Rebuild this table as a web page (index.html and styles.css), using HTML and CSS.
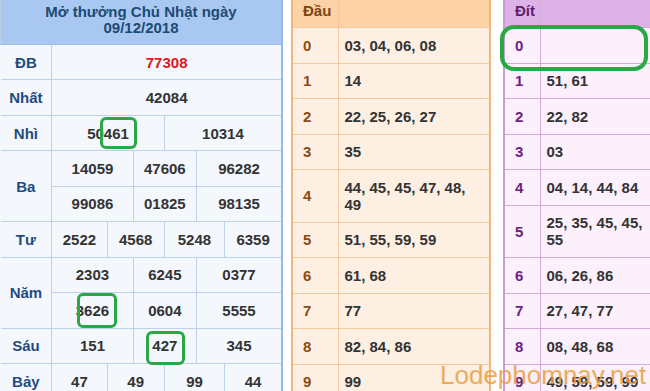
FILE: index.html
```html
<!DOCTYPE html>
<html lang="vi">
<head>
<meta charset="utf-8">
<title>Kết quả xổ số</title>
<link rel="stylesheet" href="styles.css">
</head>
<body>
<div class="page">
  <table class="kq">
    <colgroup>
      <col class="c-label"><col class="c1"><col class="c2"><col class="c3"><col class="c4"><col class="c5"><col class="c6">
    </colgroup>
    <tr><th colspan="7" class="kq-head">Mở thưởng Chủ Nhật ngày<br>09/12/2018</th></tr>
    <tr><td class="lbl">ĐB</td><td colspan="6" class="db">77308</td></tr>
    <tr><td class="lbl">Nhất</td><td colspan="6">42084</td></tr>
    <tr><td class="lbl">Nhì</td><td colspan="3">50461</td><td colspan="3">10314</td></tr>
    <tr><td class="lbl" rowspan="2">Ba</td><td colspan="2">14059</td><td colspan="2">47606</td><td colspan="2">96282</td></tr>
    <tr><td colspan="2">99086</td><td colspan="2">01825</td><td colspan="2">98135</td></tr>
    <tr><td class="lbl">Tư</td><td>2522</td><td colspan="2">4568</td><td colspan="2">5248</td><td>6359</td></tr>
    <tr><td class="lbl" rowspan="2">Năm</td><td colspan="2">2303</td><td colspan="2">6245</td><td colspan="2">0377</td></tr>
    <tr><td colspan="2">3626</td><td colspan="2">0604</td><td colspan="2">5555</td></tr>
    <tr><td class="lbl">Sáu</td><td colspan="2">151</td><td colspan="2">427</td><td colspan="2">345</td></tr>
    <tr><td class="lbl">Bảy</td><td>47</td><td colspan="2">49</td><td colspan="2">99</td><td>44</td></tr>
  </table>

  <table class="lo dau">
    <colgroup><col class="lo-k"><col></colgroup>
    <tr><th>Đầu</th><th></th></tr>
    <tr><td class="k">0</td><td>03, 04, 06, 08</td></tr>
    <tr><td class="k">1</td><td>14</td></tr>
    <tr><td class="k">2</td><td>22, 25, 26, 27</td></tr>
    <tr><td class="k">3</td><td>35</td></tr>
    <tr><td class="k">4</td><td>44, 45, 45, 47, 48, 49</td></tr>
    <tr><td class="k">5</td><td>51, 55, 59, 59</td></tr>
    <tr><td class="k">6</td><td>61, 68</td></tr>
    <tr><td class="k">7</td><td>77</td></tr>
    <tr><td class="k">8</td><td>82, 84, 86</td></tr>
    <tr><td class="k">9</td><td>99</td></tr>
  </table>

  <table class="lo dit">
    <colgroup><col class="lo-k"><col></colgroup>
    <tr><th>Đít</th><th></th></tr>
    <tr><td class="k">0</td><td></td></tr>
    <tr><td class="k">1</td><td>51, 61</td></tr>
    <tr><td class="k">2</td><td>22, 82</td></tr>
    <tr><td class="k">3</td><td>03</td></tr>
    <tr><td class="k">4</td><td>04, 14, 44, 84</td></tr>
    <tr><td class="k">5</td><td>25, 35, 45, 45, 55</td></tr>
    <tr><td class="k">6</td><td>06, 26, 86</td></tr>
    <tr><td class="k">7</td><td>27, 47, 77</td></tr>
    <tr><td class="k">8</td><td>08, 48, 68</td></tr>
    <tr><td class="k">9</td><td>49, 59, 59, 99</td></tr>
  </table>

  <div class="mark m-nhi"></div>
  <div class="mark m-nam"></div>
  <div class="mark m-sau"></div>
  <div class="mark m-dit0"></div>
  <div class="watermark">Lodephomnay.net</div>
</div>
</body>
</html>
```

FILE: styles.css
```css
html, body {
  margin: 0;
  padding: 0;
  background: #ffffff;
}
body {
  width: 650px;
  height: 391px;
  overflow: hidden;
  font-family: "Liberation Sans", Arial, sans-serif;
}
.page {
  position: relative;
  display: flex;
  align-items: flex-start;
  width: 650px;
  height: 391px;
}
table {
  border-collapse: collapse;
  table-layout: fixed;
  font-size: 15px;
  font-weight: bold;
  line-height: 17px;
  flex: none;
}

/* ---------- left results table ---------- */
.kq {
  width: 283px;
  background: #f4f7fc;
  color: #333333;
  border-right: 2px solid #95b9e6;
}
.c-label { width: 51px; }
.c1 { width: 55px; }
.c2 { width: 26px; }
.c3 { width: 31px; }
.c4 { width: 32px; }
.c5 { width: 28px; }
.c6 { width: 57px; }
.kq td, .kq th {
  border: 1px solid #bcd0ea;
  text-align: center;
  padding: 8.72px 0;
}
.kq tr:first-child th { border-top: none; }
.kq td:first-child { border-left: none; }
.kq th.kq-head {
  background: #a9c8f1;
  color: #1d4a73;
  line-height: 16px;
  padding: 4px 0 8px;
  border-bottom: 1px solid #9fbfe9;
}
.kq .lbl { color: #1f4c80; }
.kq .db { color: #e2161d; }

/* ---------- loto tables ---------- */
.lo td, .lo th {
  text-align: left;
  padding: 8.75px 10px 8.75px 6px;
}
.lo th {
  padding: 2px 10px 8px 10px;
  height: 17px;
}
.lo td.k { padding-left: 10px; }

.dau {
  width: 200px;
  margin-left: 8px;
  background: #fdf0e3;
  border-left: 2px solid #f4b77b;
  border-right: 2px solid #f4b77b;
  color: #333333;
}
.dau .lo-k { width: 46px; }
.dau td, .dau th { border: 1px solid #f6c79b; }
.dau tr:first-child th { border-top: none; }
.dau th { background: #fcd2a6; color: #7d4412; }
.dau td.k { color: #8c4b14; }
.dau td:first-child, .dau th:first-child { border-left: 2px solid #f4b77b; }
.dau td:last-child, .dau th:last-child { border-right: 2px solid #f4b77b; }

.dit {
  width: 160px;
  margin-left: 12px;
  background: #fbf0fb;
  color: #333333;
}
.dit .lo-k { width: 36px; }
.dit td, .dit th { border: 1px solid #d3abd9; }
.dit tr:first-child th { border-top: none; }
.dit th { background: #ddb2e6; color: #5e1f6c; }
.dit td.k { color: #6c2380; }
.dit td:first-child, .dit th:first-child { border-left: 2px solid #c99bd1; }

/* ---------- highlight marks ---------- */
.mark {
  position: absolute;
  box-sizing: border-box;
  border: 3px solid #2aa845;
  border-radius: 6px;
}
.m-nhi { left: 100px; top: 117px; width: 37px; height: 32px; }
.m-nam { left: 77px; top: 293px; width: 40px; height: 35px; }
.m-sau { left: 146px; top: 331px; width: 39px; height: 34px; }
.m-dit0 {
  left: 500px; top: 25px; width: 148px; height: 46px;
  border-width: 4px;
  border-radius: 14px;
}

.watermark {
  position: absolute;
  left: 440px;
  top: 360px;
  font-family: "Liberation Sans", Arial, sans-serif;
  font-size: 26px;
  line-height: 30px;
  font-weight: normal;
  color: #e8a043;
  opacity: 0.85;
  white-space: nowrap;
}
```
